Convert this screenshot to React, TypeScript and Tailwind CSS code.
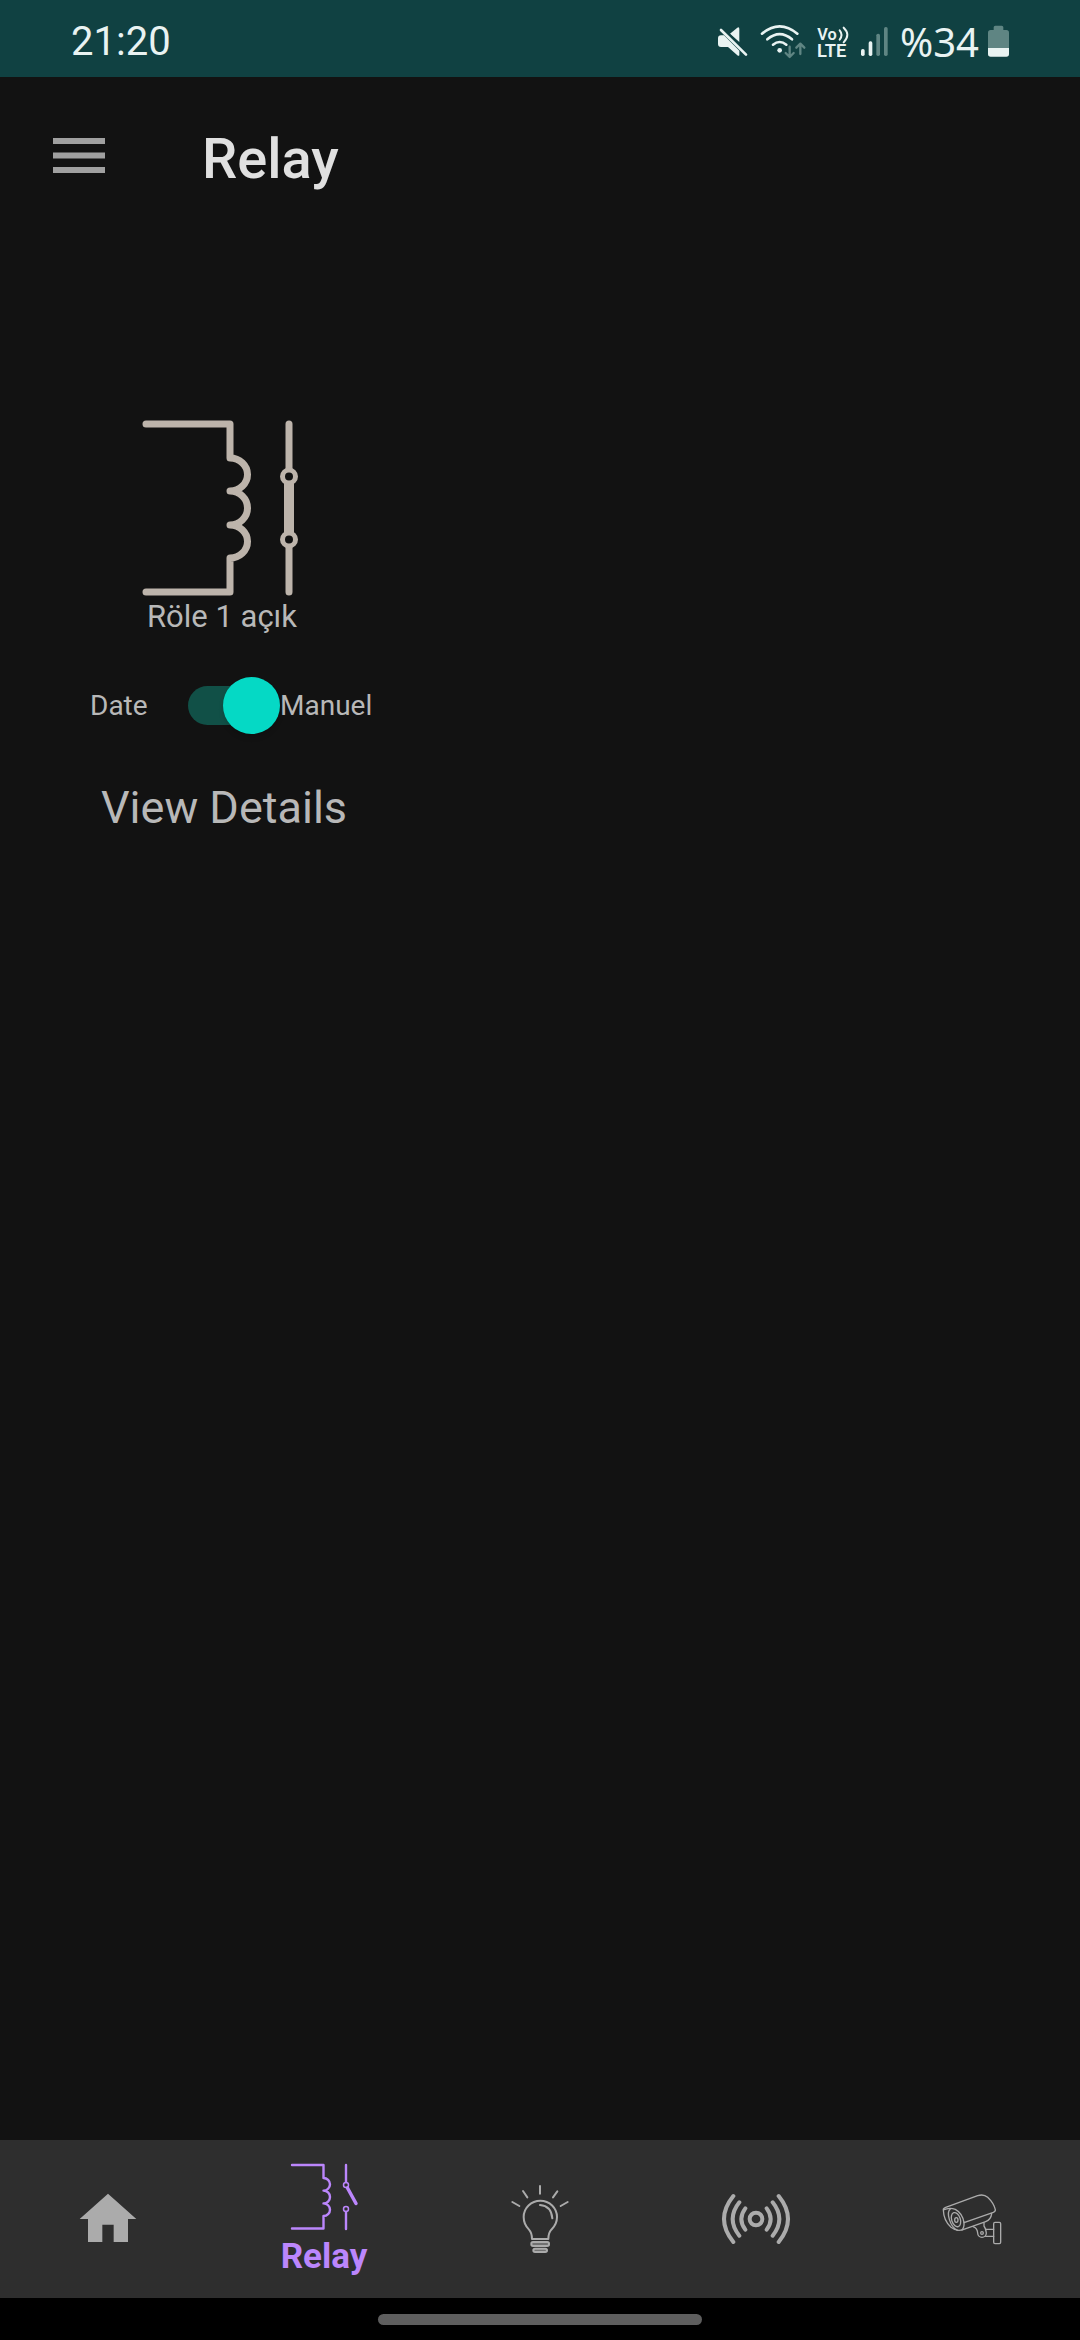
import { useState, type ReactNode } from "react";

const MuteIcon = () => (
  <svg viewBox="72 72 102 108" className="h-9 w-[34px]" fill="#e9f3f2" aria-label="Muted" role="img">
    <path d="M87 106 H96 L142 152 V166 Q140 169 136 166 L108 141 H87 Q78 141 78 132 V115 Q78 106 87 106 Z" />
    <path d="M114 101 L136 83 Q142 80 142 87 V126 Z" />
    <path d="M92 84 L168 160" stroke="#104142" strokeWidth="6" />
    <path d="M87 90 L162 164" stroke="#e9f3f2" strokeWidth="8" strokeLinecap="round" />
  </svg>
);

const WifiIcon = () => (
  <svg viewBox="207 72 138 108" className="h-9 w-[46px]" fill="none" strokeWidth="8" strokeLinecap="round" aria-label="Wi-Fi" role="img">
    <g stroke="#e9f3f2">
      <path d="M213 101 Q266 57 319 101" />
      <path d="M229 118 Q266 87 303 118" />
      <path d="M246 134 Q266 118 286 134" />
    </g>
    <circle cx="266" cy="151" r="7" fill="#e9f3f2" />
    <g stroke="#5f8583" strokeWidth="7" strokeLinejoin="round">
      <path d="M296 140 V170 M284 159 L296 171 L308 159" />
      <path d="M328 162 V132 M316 143 L328 131 L340 143" />
    </g>
  </svg>
);

const VolteIcon = () => (
  <svg viewBox="366 72 102 108" className="h-9 w-[34px]" fill="#e9f3f2" aria-label="VoLTE" role="img">
    <text x="370" y="120" fontSize="49" fontWeight="600" fontFamily="Roboto, sans-serif">Vo</text>
    <text x="369" y="172" fontSize="55" fontWeight="600" fontFamily="Roboto, sans-serif">LTE</text>
    <g fill="none" stroke="#e9f3f2" strokeWidth="6" strokeLinecap="round">
      <path d="M437 91 Q448 104 437 119" />
      <path d="M449 83 Q471 104 449 127" />
    </g>
  </svg>
);

const SignalIcon = () => (
  <svg viewBox="498 72 90 108" className="h-9 w-[30px]" aria-label="Signal" role="img">
    <rect x="501" y="147" width="11" height="21" rx="5" fill="#e9f3f2" />
    <rect x="524" y="124" width="11" height="44" rx="5" fill="#e9f3f2" />
    <rect x="547" y="101" width="11" height="67" rx="5" fill="#5f8583" />
    <rect x="570" y="81" width="11" height="87" rx="5" fill="#5f8583" />
  </svg>
);

const BatteryIcon = () => (
  <svg viewBox="891 72 69 108" className="h-9 w-[23px]" aria-label="Battery" role="img">
    <path d="M894 145 V98 Q894 90 902 90 H911 V82 Q911 77 916 77 H935 Q940 77 940 82 V90 H949 Q957 90 957 98 V145 Z" fill="#5f8583" />
    <path d="M894 144 H957 V162 Q957 170 949 170 H902 Q894 170 894 162 Z" fill="#e9f3f2" />
  </svg>
);

const ClosedRelay = () => (
  <svg viewBox="132 418 180 180" className="size-[180px]" fill="none" stroke="#bdb4ab" strokeWidth="7" strokeLinecap="round" strokeLinejoin="round" aria-hidden="true">
    <path d="M146 424 H230 V458 A17.500 16.500 0 0 1 230 491 A17.500 17 0 0 1 230 525 A17.500 16.500 0 0 1 230 558 V592 H146" />
    <path d="M289 424 V468 M289 548 V592" />
    <path d="M289 483 V533" strokeWidth="10" strokeLinecap="butt" />
    <circle cx="289" cy="476.500" r="6.500" strokeWidth="5" fill="#121212" />
    <circle cx="289" cy="539.500" r="6.500" strokeWidth="5" fill="#121212" />
  </svg>
);

const HomeIcon = () => (
  <svg viewBox="216 189 216 216" className="size-[72px]" fill="#ababab" aria-hidden="true">
    <path d="M324 221 L409 297 H384 V366 H341 V314 H307 V366 H264 V297 H239 Z" />
  </svg>
);

const OpenRelay = () => (
  <svg viewBox="288 2161 72 72" className="size-[72px]" fill="none" stroke="#bb86fc" strokeWidth="2.400" strokeLinecap="round" strokeLinejoin="round" aria-hidden="true">
    <path d="M292 2165 H323.500 V2178 A6.500 6.300 0 0 1 323.500 2190.600 A6.500 6.400 0 0 1 323.500 2203.400 A6.500 6.300 0 0 1 323.500 2216 V2228.500 H292" />
    <path d="M346 2165 V2182 M346 2212 V2229" />
    <path d="M347.500 2188 L356 2203.500" strokeWidth="3.500" />
    <circle cx="346" cy="2185" r="2.500" strokeWidth="1.500" />
    <circle cx="346" cy="2209" r="2.500" strokeWidth="1.500" />
  </svg>
);

const BulbIcon = () => (
  <svg viewBox="72 69 216 216" className="size-[72px]" fill="none" stroke="#ababab" strokeWidth="6" strokeLinecap="round" strokeLinejoin="round" aria-hidden="true">
    <path d="M180 78 V101 M129 93 L142 112 M232 94 L219 112 M97 126 L118 138 M263 126 L242 138" />
    <path d="M156 237 Q156 219 147 209 Q131 193 131 171 A50 49 0 0 1 231 171 Q231 193 214 209 Q205 219 205 237 Z" />
    <path d="M180 135 Q214 138 217 175" />
    <rect x="154" y="246" width="53" height="12" rx="5" fill="#707070" />
    <rect x="160" y="266" width="41" height="10" rx="5" fill="#707070" />
  </svg>
);

const SensorIcon = () => (
  <svg viewBox="720 69 216 216" className="size-[72px]" fill="none" stroke="#ababab" strokeWidth="12" strokeLinecap="round" aria-hidden="true">
    <circle cx="828" cy="177" r="19" />
    <path d="M796 145 Q772 177 796 209 M778 127 Q738 177 778 227 M760 108 Q704 177 760 246" />
    <path d="M860 145 Q884 177 860 209 M878 127 Q918 177 878 227 M896 108 Q952 177 896 246" />
  </svg>
);

const CameraIcon = () => (
  <svg viewBox="108 69 216 216" className="size-[72px]" fill="none" stroke="#ababab" strokeWidth="4" strokeLinecap="round" strokeLinejoin="round" aria-hidden="true">
    <path d="M130 150 Q129 145 137 142 L233 107 Q251 101 263 112 Q281 129 286 149 Q287 154 280 157 L192 188 Q188 160 166 148 Q148 141 130 150 Q131 182 153 202 Q170 216 189 209 L257 185 Q273 179 275 161" />
    <path d="M192 188 Q193 203 186 210 M151 147 Q141 155 148 178 Q155 202 172 211" />
    <ellipse cx="168" cy="179" rx="13" ry="22" transform="rotate(-18 168 179)" />
    <ellipse cx="169" cy="180" rx="5" ry="7" />
    <path d="M219 200 Q232 204 233 219 A13 13 0 0 0 259 219 Q258 206 252 198 V188" />
    <circle cx="246" cy="219" r="4" />
    <path d="M257 208 H281 M257 229 H281" />
    <rect x="281" y="187" width="21" height="64" rx="4" />
  </svg>
);

type Tab = { name: string; icon: ReactNode };

const tabs: Tab[] = [
  { name: "Home", icon: <HomeIcon /> },
  { name: "Relay", icon: <OpenRelay /> },
  { name: "Light", icon: <BulbIcon /> },
  { name: "Sensor", icon: <SensorIcon /> },
  { name: "Camera", icon: <CameraIcon /> },
];

function StatusBar() {
  return (
    <div className="flex h-[77px] items-center justify-between bg-[#104142] pt-1.5 pr-[70px] pl-[71px] text-[40px] leading-10 text-[#e9f3f2]">
      <time>21:20</time>
      <div className="flex items-center gap-2.5">
        <MuteIcon />
        <WifiIcon />
        <VolteIcon />
        <SignalIcon />
        <div className="flex items-center gap-2">
          <span className="font-['Noto_Sans',sans-serif]">%34</span>
          <BatteryIcon />
        </div>
      </div>
    </div>
  );
}

function RelayCard() {
  const [manual, setManual] = useState(true);
  return (
    <section className="flex w-[360px] flex-col items-center text-[#b8b8b8]">
      <ClosedRelay />
      <p className="text-[31px] leading-[38px]">Röle 1 açık</p>
      <div className="mt-[37px] flex h-16 items-center self-start pl-12 text-[28px] leading-8">
        <label htmlFor="mode" className="w-[98px] pt-0.5">Date</label>
        <input
          id="mode"
          type="checkbox"
          role="switch"
          checked={manual}
          onChange={(e) => setManual(e.target.checked)}
          className="relative flex h-14 w-[92px] appearance-none items-center before:absolute before:left-0 before:h-[39px] before:w-20 before:rounded-full before:bg-[#115047] after:relative after:size-[57px] after:rounded-full after:bg-[#05d9c5] after:shadow-md checked:justify-end"
        />
        <label htmlFor="mode" className="pt-0.5">Manuel</label>
      </div>
      <button type="button" className="mt-[45px] pl-1 text-[45px] leading-[52px]">View Details</button>
    </section>
  );
}

export default function App() {
  return (
    <div className="flex min-h-screen flex-col bg-[#121212] font-['Roboto',sans-serif]">
      <StatusBar />
      <header className="flex h-[164px] items-center gap-[87px] pl-[43px]">
        <button type="button" aria-label="Open menu">
          <svg viewBox="0 0 72 72" className="size-[72px]" fill="#a0a0a0" aria-hidden="true">
            <path d="M10 15 H62 V21 H10 Z M10 29.500 H62 V35.500 H10 Z M10 44 H62 V50 H10 Z" />
          </svg>
        </button>
        <h1 className="text-[56px] leading-[64px] font-medium text-[#e0e0e0]">Relay</h1>
      </header>
      <main className="grow pt-[177px] pl-[42px]">
        <RelayCard />
      </main>
      <nav className="grid h-[158px] grid-cols-5 bg-[#2e2e2e]">
        {tabs.map((tab) => {
          const active = tab.name === "Relay";
          return (
            <button
              key={tab.name}
              type="button"
              aria-label={tab.name}
              aria-current={active ? "page" : undefined}
              className="flex flex-col items-center justify-center gap-1"
            >
              {tab.icon}
              {active && <span className="text-[35px] leading-10 font-bold text-[#bb86fc]">{tab.name}</span>}
            </button>
          );
        })}
      </nav>
      <div className="flex h-[42px] items-center justify-center bg-black">
        <div className="h-[11px] w-[30%] rounded-full bg-[#5e5e5e]" />
      </div>
    </div>
  );
}
